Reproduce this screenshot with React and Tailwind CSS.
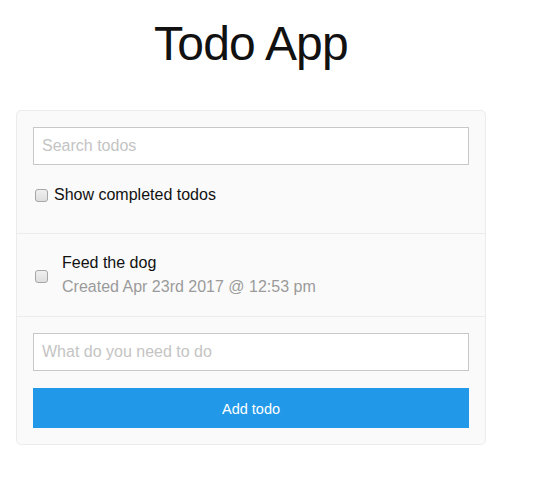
import React, { useState } from 'react';

const Box = ({ checked, onClick }) => (
  <span
    onClick={onClick}
    className="inline-block w-[13px] h-[13px] shrink-0 rounded-[3px] border border-[#a6a6a6] bg-gradient-to-b from-[#f0f0f0] to-[#dedede]"
  >
    {checked && <span className="block w-full h-full text-[10px] leading-[11px] text-center">✓</span>}
  </span>
);

const App = () => {
  const [showDone, setShowDone] = useState(false);
  const [done, setDone] = useState(false);

  return (
    <div className="min-h-screen bg-white" style={{ fontFamily: '"Liberation Sans", Arial, sans-serif' }}>
      <div className="w-[502px] px-4 pt-[14px]">
        <h1 className="text-center text-[48px] leading-[60px] text-[#111] tracking-[-0.8px]">Todo App</h1>

        <div className="mt-[36px] bg-[#fafafa] border border-[#ececec] rounded-[5px]">
          {/* search */}
          <div className="px-4 pt-4 pb-[26px] border-b border-[#ececec]">
            <input
              type="text"
              placeholder="Search todos"
              className="w-full h-[38px] px-2 bg-white border border-[#c8c8c8] text-base text-[#333] placeholder:text-[#c4c4c4] outline-none"
            />
            <label className="mt-[18px] flex items-center h-6 text-base text-[#111] cursor-pointer">
              <span className="ml-[2px] mr-[6px] flex">
                <Box checked={showDone} onClick={() => setShowDone(!showDone)} />
              </span>
              Show completed todos
            </label>
          </div>

          {/* list */}
          <div className="px-4 pt-[17px] pb-[17px] border-b border-[#ececec] flex items-center">
            <span className="ml-[2px] mr-[14px] mt-[2px] flex">
              <Box checked={done} onClick={() => setDone(!done)} />
            </span>
            <div className="leading-6 text-base">
              <p className="text-[#111]">Feed the dog</p>
              <p className="text-[#9a9a9a]">Created Apr 23rd 2017 @ 12:53 pm</p>
            </div>
          </div>

          {/* add */}
          <div className="px-4 pt-4 pb-4">
            <input
              type="text"
              placeholder="What do you need to do"
              className="w-full h-[38px] px-2 bg-white border border-[#c8c8c8] text-base text-[#333] placeholder:text-[#c4c4c4] outline-none"
            />
            <button className="mt-[17px] w-full h-10 bg-[#2199e8] text-white text-[14.5px] leading-[42px]">Add todo</button>
          </div>
        </div>
      </div>
    </div>
  );
};

export default App;
